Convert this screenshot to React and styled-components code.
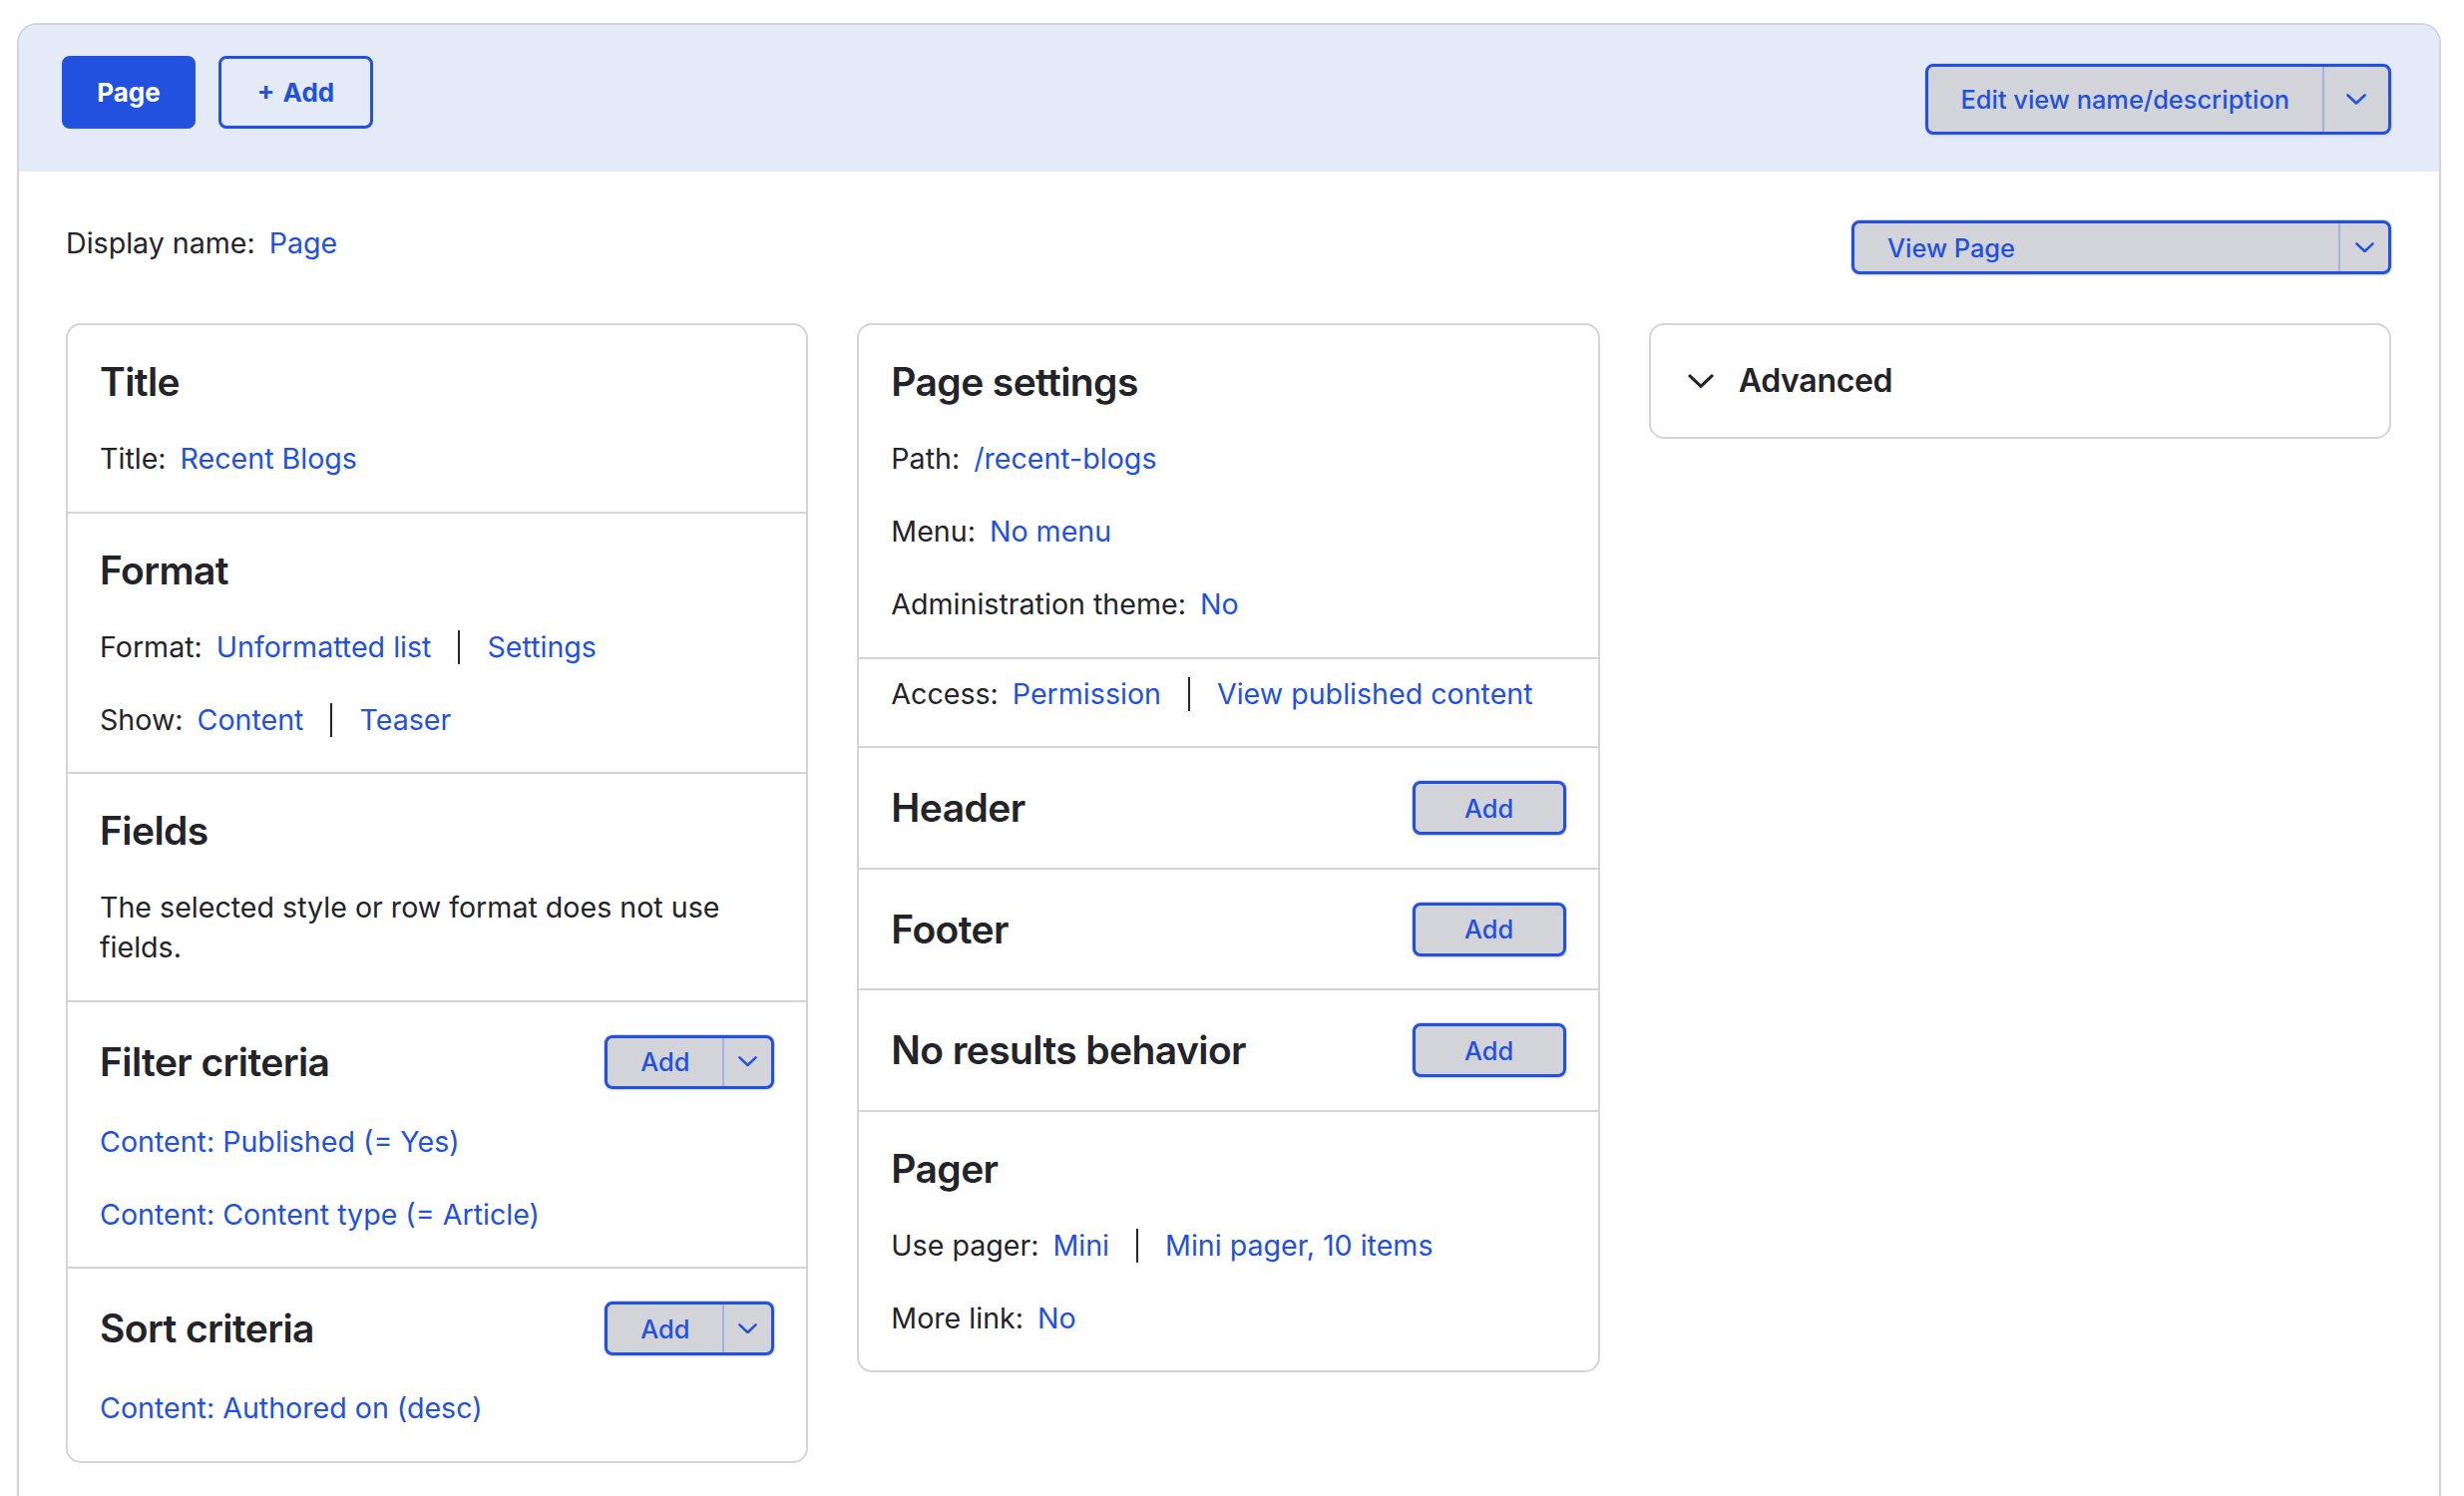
import React from "react";
import styled, { createGlobalStyle } from "styled-components";

const BLUE = "#2251df";
const INK = "#232429";
const LINE = "#d3d4d9";

const GlobalStyle = createGlobalStyle`
  html, body {
    margin: 0;
    padding: 0;
    height: 100%;
    overflow: hidden;
    background: #ffffff;
  }
  body {
    font-family: Inter, "Noto Sans", "Liberation Sans", sans-serif;
    color: ${INK};
    -webkit-font-smoothing: antialiased;
  }
  * {
    box-sizing: border-box;
  }
`;

const Frame = styled.div`
  margin: 23px 23px 0 17px;
  border: 2px solid ${LINE};
  border-bottom: none;
  border-radius: 20px 20px 0 0;
  overflow: hidden;
  min-height: 1480px;
`;

const TopBar = styled.div`
  display: flex;
  justify-content: space-between;
  align-items: flex-start;
  height: 147px;
  padding: 31px 48px 0 43px;
  background: #e4eaf8;
`;

const Tabs = styled.div`
  display: flex;
  gap: 23px;
`;

const TabButton = styled.button`
  height: 73px;
  width: ${(p) => p.$width}px;
  border: 3px solid ${BLUE};
  border-radius: 8px;
  background: ${(p) => (p.$primary ? BLUE : "transparent")};
  color: ${(p) => (p.$primary ? "#ffffff" : BLUE)};
  font-family: inherit;
  font-size: 26px;
  font-weight: 700;
  word-spacing: 2px;
  cursor: pointer;
`;

const SplitButton = styled.div`
  display: inline-flex;
  align-items: stretch;
  height: ${(p) => p.$height}px;
  width: ${(p) => (p.$width ? `${p.$width}px` : "auto")};
  margin-top: ${(p) => p.$offset || 0}px;
  border: 3px solid ${BLUE};
  border-radius: 8px;
  background: ${LINE};
  box-shadow: 0 0 0 1px #d6d7dc, 0 2px 3px rgba(35, 36, 41, 0.08);
  color: ${BLUE};
  font-size: 25.4px;
  font-weight: 500;
  cursor: pointer;
`;

const ButtonMain = styled.span`
  display: flex;
  align-items: center;
  justify-content: ${(p) => (p.$left ? "flex-start" : "center")};
  flex: ${(p) => (p.$grow ? 1 : "none")};
  width: ${(p) => (p.$width ? `${p.$width}px` : "auto")};
  padding: 0 ${(p) => p.$pad || 0}px;
`;

const ButtonToggle = styled.span`
  display: flex;
  align-items: center;
  justify-content: center;
  width: ${(p) => p.$width}px;
  border-left: 2px solid #a2b1e3;
`;

const Content = styled.div`
  padding: 49px 48px 48px 47px;
`;

const DisplayRow = styled.div`
  display: flex;
  justify-content: space-between;
  align-items: flex-start;
  height: 54px;
  margin-bottom: 49px;
`;

const DisplayName = styled.div`
  display: flex;
  align-items: center;
  margin-top: 3px;
  font-size: 28.6px;
  line-height: 40px;
`;

const Columns = styled.div`
  display: grid;
  grid-template-columns: repeat(3, 1fr);
  column-gap: 49px;
  align-items: start;
`;

const Card = styled.div`
  border: 2px solid ${LINE};
  border-radius: 15px;
  background: #ffffff;
`;

const Section = styled.div`
  display: flex;
  flex-direction: column;
  gap: 33px;
  padding: ${(p) => (p.$compact ? "15px 32px 32.5px" : "33px 32px 32.5px")};
  border-top: ${(p) => (p.$first ? "none" : `2px solid ${LINE}`)};
`;

const SectionHead = styled.div`
  display: flex;
  justify-content: space-between;
  align-items: center;
  min-height: 48px;
`;

const Heading = styled.h2`
  margin: 0;
  font-size: 39px;
  line-height: 48px;
  font-weight: 600;
  letter-spacing: -0.6px;
  color: ${INK};
`;

const Line = styled.div`
  display: flex;
  align-items: center;
  font-size: 28.6px;
  line-height: 40px;
`;

const Text = styled.p`
  margin: 0;
  font-size: 28.6px;
  line-height: 40px;
`;

const Label = styled.span`
  margin-right: 14px;
`;

const Link = styled.a`
  color: ${BLUE};
  text-decoration: none;
  cursor: pointer;
`;

const Sep = styled.span`
  display: inline-block;
  width: 2px;
  height: 34px;
  margin: 0 27px;
  background: ${INK};
`;

const Summary = styled.div`
  display: flex;
  align-items: center;
  gap: 25px;
  padding: 33px 37px;
  font-size: 32px;
  line-height: 46px;
  font-weight: 600;
  letter-spacing: -0.3px;
`;

function Chevron({ size = 19, stroke = BLUE, width = 2.6 }) {
  return (
    <svg width={size} height={size * 0.55} viewBox="0 0 20 11" fill="none">
      <polyline
        points="1.5,1.5 10,9.5 18.5,1.5"
        stroke={stroke}
        strokeWidth={width}
        strokeLinecap="round"
        strokeLinejoin="round"
      />
    </svg>
  );
}

function Setting({ label, links }) {
  return (
    <Line>
      {label && <Label>{label}</Label>}
      {links.map((l, i) => (
        <React.Fragment key={l}>
          {i > 0 && <Sep />}
          <Link>{l}</Link>
        </React.Fragment>
      ))}
    </Line>
  );
}

function AddButton() {
  return (
    <SplitButton $height={54} $width={154}>
      <ButtonMain $grow>Add</ButtonMain>
    </SplitButton>
  );
}

function AddDropButton() {
  return (
    <SplitButton $height={54}>
      <ButtonMain $width={115}>Add</ButtonMain>
      <ButtonToggle $width={49}>
        <Chevron />
      </ButtonToggle>
    </SplitButton>
  );
}

export default function App() {
  return (
    <>
      <GlobalStyle />
      <Frame>
        <TopBar>
          <Tabs>
            <TabButton $primary $width={134}>
              Page
            </TabButton>
            <TabButton $width={155}>+ Add</TabButton>
          </Tabs>
          <SplitButton $height={71} $offset={8}>
            <ButtonMain $pad={33}>Edit view name/description</ButtonMain>
            <ButtonToggle $width={66}>
              <Chevron size={20} />
            </ButtonToggle>
          </SplitButton>
        </TopBar>

        <Content>
          <DisplayRow>
            <DisplayName>
              <Label>Display name:</Label>
              <Link>Page</Link>
            </DisplayName>
            <SplitButton $height={54} $width={541}>
              <ButtonMain $grow $left $pad={33}>
                View Page
              </ButtonMain>
              <ButtonToggle $width={50}>
                <Chevron />
              </ButtonToggle>
            </SplitButton>
          </DisplayRow>

          <Columns>
            <Card>
              <Section $first>
                <Heading>Title</Heading>
                <Setting label="Title:" links={["Recent Blogs"]} />
              </Section>
              <Section>
                <Heading>Format</Heading>
                <Setting
                  label="Format:"
                  links={["Unformatted list", "Settings"]}
                />
                <Setting label="Show:" links={["Content", "Teaser"]} />
              </Section>
              <Section>
                <Heading>Fields</Heading>
                <Text>
                  The selected style or row format does not use fields.
                </Text>
              </Section>
              <Section>
                <SectionHead>
                  <Heading>Filter criteria</Heading>
                  <AddDropButton />
                </SectionHead>
                <Setting links={["Content: Published (= Yes)"]} />
                <Setting links={["Content: Content type (= Article)"]} />
              </Section>
              <Section>
                <SectionHead>
                  <Heading>Sort criteria</Heading>
                  <AddDropButton />
                </SectionHead>
                <Setting links={["Content: Authored on (desc)"]} />
              </Section>
            </Card>

            <Card>
              <Section $first>
                <Heading>Page settings</Heading>
                <Setting label="Path:" links={["/recent-blogs"]} />
                <Setting label="Menu:" links={["No menu"]} />
                <Setting label="Administration theme:" links={["No"]} />
              </Section>
              <Section $compact>
                <Setting
                  label="Access:"
                  links={["Permission", "View published content"]}
                />
              </Section>
              <Section>
                <SectionHead>
                  <Heading>Header</Heading>
                  <AddButton />
                </SectionHead>
              </Section>
              <Section>
                <SectionHead>
                  <Heading>Footer</Heading>
                  <AddButton />
                </SectionHead>
              </Section>
              <Section>
                <SectionHead>
                  <Heading>No results behavior</Heading>
                  <AddButton />
                </SectionHead>
              </Section>
              <Section>
                <Heading>Pager</Heading>
                <Setting
                  label="Use pager:"
                  links={["Mini", "Mini pager, 10 items"]}
                />
                <Setting label="More link:" links={["No"]} />
              </Section>
            </Card>

            <Card>
              <Summary>
                <Chevron size={26} stroke={INK} width={2.4} />
                <span>Advanced</span>
              </Summary>
            </Card>
          </Columns>
        </Content>
      </Frame>
    </>
  );
}
